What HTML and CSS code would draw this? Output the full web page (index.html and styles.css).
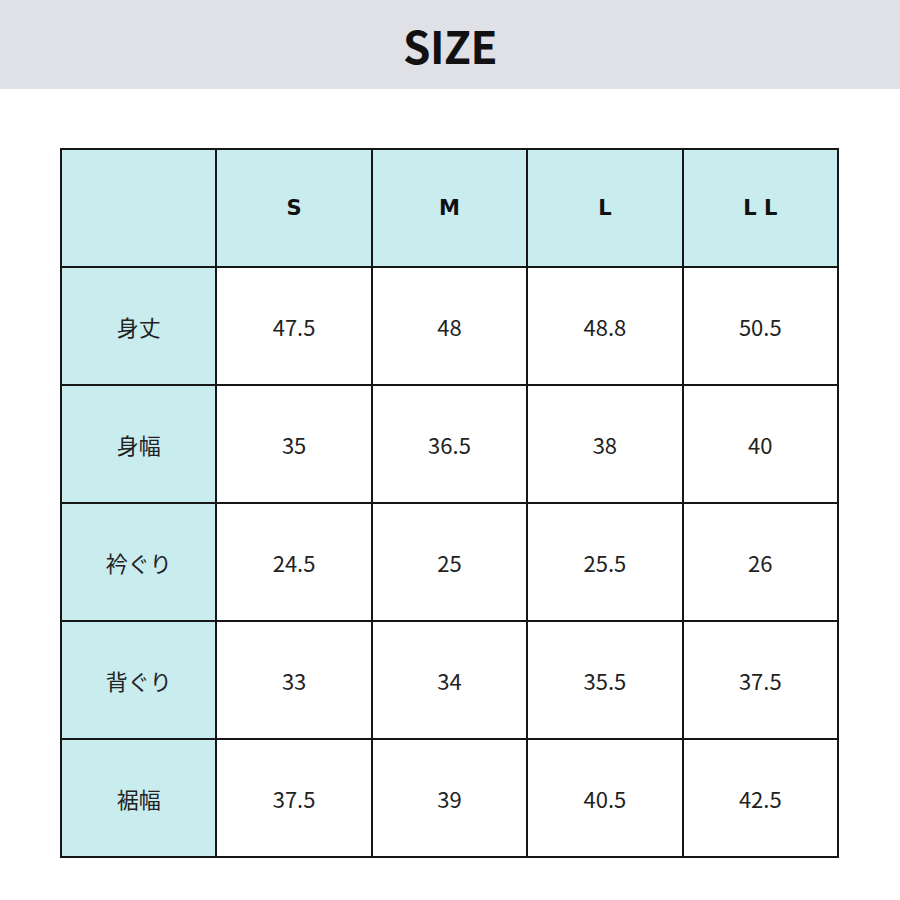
FILE: index.html
```html
<!DOCTYPE html>
<html lang="ja">
<head>
<meta charset="utf-8">
<link rel="stylesheet" href="styles.css">
</head>
<body>
<header class="band"><h1 class="title">SIZE</h1></header>
<main class="wrap">
<table class="size-table">
<thead>
<tr><th class="corner"></th><th>S</th><th>M</th><th>L</th><th>L L</th></tr>
</thead>
<tbody>
<tr><th>身丈</th><td>47.5</td><td>48</td><td>48.8</td><td>50.5</td></tr>
<tr><th>身幅</th><td>35</td><td>36.5</td><td>38</td><td>40</td></tr>
<tr><th>衿ぐり</th><td>24.5</td><td>25</td><td>25.5</td><td>26</td></tr>
<tr><th>背ぐり</th><td>33</td><td>34</td><td>35.5</td><td>37.5</td></tr>
<tr><th>裾幅</th><td>37.5</td><td>39</td><td>40.5</td><td>42.5</td></tr>
</tbody>
</table>
</main>
</body>
</html>
```
FILE: styles.css
```css
html, body { margin: 0; padding: 0; background: #fff; }
body { width: 900px; height: 900px; overflow: hidden; font-family: "Noto Sans CJK JP", "Noto Sans", sans-serif; }
.band { height: 89px; background: #e0e0e7; display: flex; align-items: center; justify-content: center; }
.title { margin: 0; font-family: "Noto Sans CJK JP", sans-serif; font-weight: 700; font-size: 44px; line-height: 1; color: #111; letter-spacing: -0.5px; }
.wrap { padding: 59px 0 0 60px; }
.size-table { border-collapse: collapse; table-layout: fixed; width: 779px; }
.size-table th, .size-table td { border: 2px solid #161616; height: 116px; padding: 0; text-align: center; vertical-align: middle; width: 20%; }
.size-table thead th { background: #c9ecee; font-family: "DejaVu Sans", sans-serif; font-weight: 700; font-size: 21px; color: #111; }
.size-table tbody th { background: #c9ecee; font-weight: 400; font-size: 22px; color: #222; }
.size-table td { background: #fff; font-size: 22px; color: #222; }
```
